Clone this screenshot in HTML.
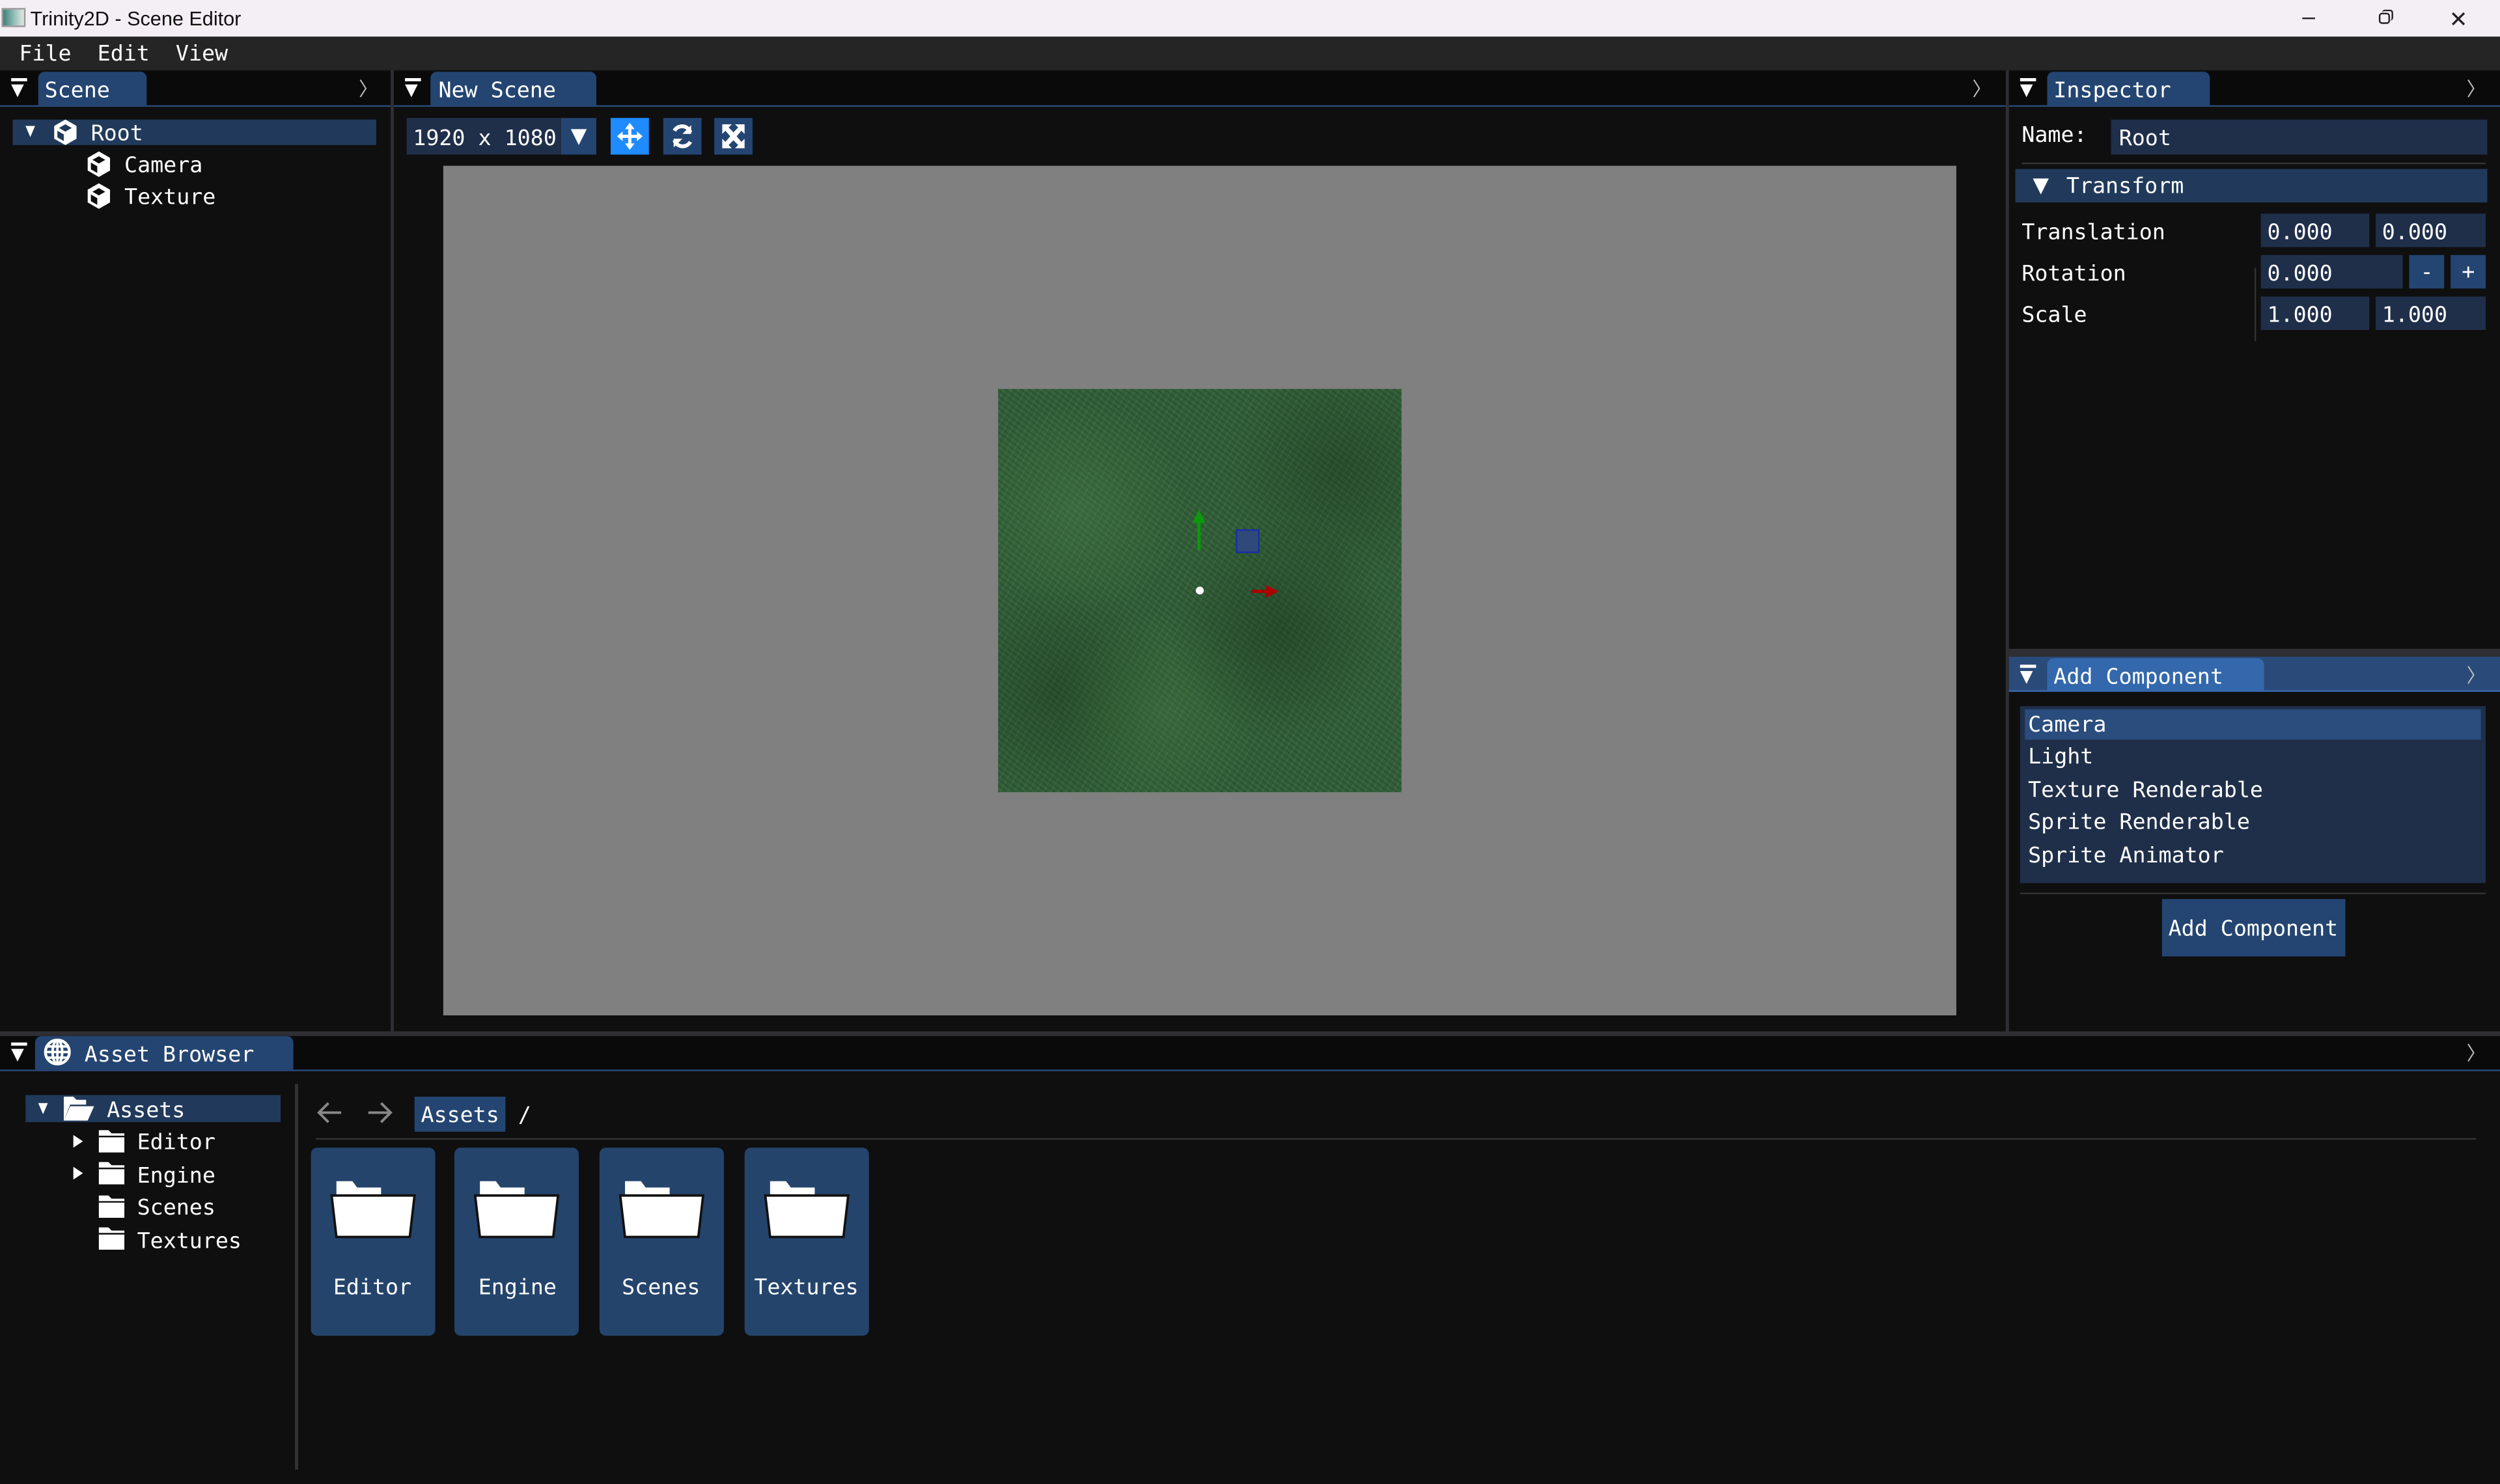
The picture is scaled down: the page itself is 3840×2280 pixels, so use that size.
<!DOCTYPE html>
<html><head><meta charset="utf-8"><style>
*{margin:0;padding:0;box-sizing:border-box}
html,body{width:3840px;height:2280px;overflow:hidden;background:#0f0f0f}
#r{position:absolute;left:0;top:0;width:1568px;height:931px;transform:scale(2.449);transform-origin:0 0;font-family:"DejaVu Sans Mono","Liberation Mono",monospace;font-size:13.6px;color:#fff;background:#0f0f0f}
.a{position:absolute}
.t{position:absolute;white-space:pre;line-height:16px;margin-top:1px}
.tabbar{position:absolute;height:22px;background:#0a0a0a;border-bottom:1px solid #294a7a}
.tab{position:absolute;top:1px;height:21px;background:#244571;border-radius:4px 4px 0 0}
.tri{position:absolute;width:0;height:0;border-left:4.5px solid transparent;border-right:4.5px solid transparent;border-top:8px solid #fff}
.fld{position:absolute;background:#1f2f4a;height:21px}
.chev{position:absolute;color:#bbb;font-size:12px}
</style></head><body><div id="r">
<div class="a" style="left:0;top:0;width:1568px;height:23px;background:#f4eef5"></div>
<div class="a" style="left:1px;top:5px;width:15px;height:12px;background:linear-gradient(90deg,#3f7f7a,#9fc6c0 60%,#e6e6e6);border:1px solid #999"></div>
<div class="t" style="left:19px;top:3px;color:#111;font-family:'Liberation Sans',sans-serif;font-size:12.5px">Trinity2D - Scene Editor</div>
<div class="a" style="left:1444px;top:11px;width:8px;height:1px;background:#222"></div>
<div class="a" style="left:1492px;top:8px;width:7px;height:7px;border:1px solid #222;border-radius:2px"></div>
<div class="a" style="left:1494px;top:6px;width:7px;height:7px;border-top:1px solid #222;border-right:1px solid #222;border-radius:2px"></div>
<div class="t" style="left:1536px;top:3px;color:#222;font-family:'Liberation Sans',sans-serif;font-size:14px">✕</div>
<div class="a" style="left:0;top:23px;width:1568px;height:21px;background:#252525"></div>
<div class="t" style="left:12px;top:25px">File  Edit  View</div>
<div class="a" style="left:245px;top:44px;width:2px;height:604px;background:#2e2e34"></div>
<div class="a" style="left:1258px;top:44px;width:2px;height:604px;background:#2e2e34"></div>
<div class="a" style="left:0;top:647px;width:1568px;height:3px;background:#2e2e34"></div>

<div class="tabbar" style="left:0;top:45px;width:245px"></div>
<div class="a" style="left:7px;top:49px;width:10px;height:2px;background:#fff"></div><div class="tri" style="left:7px;top:53px"></div>
<div class="tab" style="left:24px;top:45px;width:68px"></div>
<div class="t" style="left:28px;top:48px">Scene</div>
<div class="chev" style="left:225px;top:47px">〉</div>
<div class="a" style="left:8px;top:75px;width:228px;height:16px;background:#213a5b"></div>
<div class="tri" style="left:16px;top:79px;border-top-width:7px;border-left-width:3.5px;border-right-width:3.5px"></div>
<svg class="a" style="left:32px;top:74px" width="18" height="18" viewBox="0 0 18 18"><path d="M9 1L16 5V13L9 17L2 13V5Z" fill="#fff"/><path d="M9 4L13 6.3L9 8.6L5 6.3Z" fill="#213a5b"/><path d="M4 8L8 10.3V14.5L4 12.2Z" fill="#213a5b"/></svg>
<div class="t" style="left:57px;top:75px">Root</div>
<svg class="a" style="left:53px;top:94px" width="18" height="18" viewBox="0 0 18 18"><path d="M9 1L16 5V13L9 17L2 13V5Z" fill="#fff"/><path d="M9 4L13 6.3L9 8.6L5 6.3Z" fill="#0f0f0f"/><path d="M4 8L8 10.3V14.5L4 12.2Z" fill="#0f0f0f"/></svg>
<div class="t" style="left:78px;top:95px">Camera</div>
<svg class="a" style="left:53px;top:114px" width="18" height="18" viewBox="0 0 18 18"><path d="M9 1L16 5V13L9 17L2 13V5Z" fill="#fff"/><path d="M9 4L13 6.3L9 8.6L5 6.3Z" fill="#0f0f0f"/><path d="M4 8L8 10.3V14.5L4 12.2Z" fill="#0f0f0f"/></svg>
<div class="t" style="left:78px;top:115px">Texture</div>

<div class="tabbar" style="left:247px;top:45px;width:1011px"></div>
<div class="a" style="left:254px;top:49px;width:10px;height:2px;background:#fff"></div><div class="tri" style="left:254px;top:53px"></div>
<div class="tab" style="left:270px;top:45px;width:104px"></div>
<div class="t" style="left:275px;top:48px">New Scene</div>
<div class="chev" style="left:1237px;top:47px">〉</div>
<div class="a" style="left:255px;top:74px;width:97px;height:23px;background:#1f2f4a"></div>
<div class="a" style="left:352px;top:74px;width:22px;height:23px;background:#244571"></div>
<div class="tri" style="left:358px;top:81px;border-top-width:10px;border-left-width:5px;border-right-width:5px"></div>
<div class="t" style="left:259px;top:78px">1920 x 1080</div>
<div class="a" style="left:383px;top:74px;width:24px;height:23px;background:#1f8bff"></div>
<svg class="a" style="left:385px;top:75px" width="20" height="21" viewBox="0 0 20 21"><path d="M10 2L13 6H11V9.5H14.5V7.5L18 10.5L14.5 13.5V11.5H11V15H13L10 19L7 15H9V11.5H5.5V13.5L2 10.5L5.5 7.5V9.5H9V6H7Z" fill="#fff"/></svg>
<div class="a" style="left:416px;top:74px;width:24px;height:23px;background:#244571"></div>
<svg class="a" style="left:418px;top:75px" width="20" height="21" viewBox="0 0 20 21"><path d="M15 8A5.5 5.5 0 0 0 5 7" stroke="#fff" stroke-width="2.4" fill="none"/><path d="M15.5 3.5V9H10Z" fill="#fff"/><path d="M5 13A5.5 5.5 0 0 0 15 14" stroke="#fff" stroke-width="2.4" fill="none"/><path d="M4.5 17.5V12H10Z" fill="#fff"/></svg>
<div class="a" style="left:448px;top:74px;width:24px;height:23px;background:#244571"></div>
<svg class="a" style="left:450px;top:75px" width="20" height="21" viewBox="0 0 20 21"><path d="M3 3H9L7 5L10 8L13 5L11 3H17V9L15 7L12 10.5L15 14L17 12V18H11L13 16L10 13L7 16L9 18H3V12L5 14L8 10.5L5 7L3 9Z" fill="#fff"/></svg>
<div class="a" style="left:278px;top:104px;width:949px;height:533px;background:#808080"></div>
<div class="a" style="left:626px;top:244px;width:253px;height:253px;background:
radial-gradient(circle at 20% 30%,rgba(80,140,75,.3),transparent 25%),
radial-gradient(circle at 70% 60%,rgba(15,40,15,.35),transparent 30%),
radial-gradient(circle at 40% 80%,rgba(75,130,70,.3),transparent 25%),
radial-gradient(circle at 85% 20%,rgba(15,40,15,.3),transparent 25%),
radial-gradient(circle at 15% 75%,rgba(15,40,15,.3),transparent 25%),
repeating-linear-gradient(37deg,rgba(0,0,0,.15) 0 1px,transparent 1px 3px),
repeating-linear-gradient(-61deg,rgba(110,170,95,.12) 0 1px,transparent 1px 4px),
#33603a"></div>
<div class="a" style="left:751px;top:327px;width:1.5px;height:18px;background:#0a9a0a"></div>
<div class="tri" style="left:748px;top:320px;border-top:none;border-bottom:8px solid #0a9a0a;border-left-width:4px;border-right-width:4px"></div>
<div class="a" style="left:785px;top:370px;width:10px;height:1.5px;background:#a00"></div>
<div class="a" style="left:794px;top:367px;width:0;height:0;border-top:4px solid transparent;border-bottom:4px solid transparent;border-left:8px solid #a00"></div>
<div class="a" style="left:750px;top:368px;width:5px;height:5px;border-radius:50%;background:#fff"></div>
<div class="a" style="left:775px;top:332px;width:15px;height:15px;background:#2f4a7a;border:1px solid #1a2fa0"></div>

<div class="tabbar" style="left:1260px;top:45px;width:308px"></div>
<div class="a" style="left:1267px;top:49px;width:10px;height:2px;background:#fff"></div><div class="tri" style="left:1267px;top:53px"></div>
<div class="tab" style="left:1284px;top:45px;width:102px"></div>
<div class="t" style="left:1288px;top:48px">Inspector</div>
<div class="chev" style="left:1547px;top:47px">〉</div>
<div class="t" style="left:1268px;top:76px">Name:</div>
<div class="fld" style="left:1324px;top:75px;width:236px;height:22px"></div>
<div class="t" style="left:1329px;top:78px">Root</div>
<div class="a" style="left:1268px;top:102px;width:291px;height:1px;background:#333"></div>
<div class="a" style="left:1264px;top:106px;width:296px;height:21px;background:#213a5b"></div>
<div class="tri" style="left:1275px;top:112px;border-top-width:10px;border-left-width:5px;border-right-width:5px"></div>
<div class="t" style="left:1296px;top:108px">Transform</div>
<div class="t" style="left:1268px;top:137px">Translation</div>
<div class="t" style="left:1268px;top:163px">Rotation</div>
<div class="t" style="left:1268px;top:189px">Scale</div>
<div class="a" style="left:1414px;top:168px;width:1px;height:46px;background:#333"></div>
<div class="fld" style="left:1418px;top:134px;width:68px"></div><div class="t" style="left:1422px;top:137px">0.000</div>
<div class="fld" style="left:1490px;top:134px;width:69px"></div><div class="t" style="left:1494px;top:137px">0.000</div>
<div class="fld" style="left:1418px;top:160px;width:89px"></div><div class="t" style="left:1422px;top:163px">0.000</div>
<div class="a" style="left:1511px;top:160px;width:22px;height:21px;background:#244571"></div><div class="t" style="left:1518px;top:162px">-</div>
<div class="a" style="left:1537px;top:160px;width:22px;height:21px;background:#244571"></div><div class="t" style="left:1544px;top:162px">+</div>
<div class="fld" style="left:1418px;top:186px;width:68px"></div><div class="t" style="left:1422px;top:189px">1.000</div>
<div class="fld" style="left:1490px;top:186px;width:69px"></div><div class="t" style="left:1494px;top:189px">1.000</div>

<div class="a" style="left:1260px;top:407px;width:308px;height:5px;background:#2e2e34"></div>
<div class="a" style="left:1260px;top:412px;width:308px;height:22px;background:#2a4b7a;border-bottom:1px solid #3a6aaa"></div>
<div class="a" style="left:1267px;top:417px;width:10px;height:2px;background:#fff"></div><div class="tri" style="left:1267px;top:421px"></div>
<div class="a" style="left:1284px;top:413px;width:136px;height:21px;background:#3368ac;border-radius:4px 4px 0 0"></div>
<div class="t" style="left:1288px;top:416px">Add Component</div>
<div class="chev" style="left:1547px;top:415px">〉</div>
<div class="a" style="left:1267px;top:443px;width:292px;height:111px;background:#1f2f4a"></div>
<div class="a" style="left:1270px;top:445px;width:286px;height:19px;background:#2a4d7d"></div>
<div class="t" style="left:1272px;top:446px">Camera</div>
<div class="t" style="left:1272px;top:466px">Light</div>
<div class="t" style="left:1272px;top:487px">Texture Renderable</div>
<div class="t" style="left:1272px;top:507px">Sprite Renderable</div>
<div class="t" style="left:1272px;top:528px">Sprite Animator</div>
<div class="a" style="left:1267px;top:560px;width:292px;height:1px;background:#333"></div>
<div class="a" style="left:1356px;top:564px;width:115px;height:36px;background:#244571"></div>
<div class="t" style="left:1360px;top:574px">Add Component</div>

<div class="tabbar" style="left:0;top:650px;width:1568px"></div>
<div class="a" style="left:7px;top:654px;width:10px;height:2px;background:#fff"></div><div class="tri" style="left:7px;top:658px"></div>
<div class="tab" style="left:22px;top:650px;width:162px"></div>
<svg class="a" style="left:27px;top:651px" width="18" height="18" viewBox="0 0 18 18"><circle cx="9" cy="9" r="7.5" fill="none" stroke="#fff" stroke-width="1.8"/><ellipse cx="9" cy="9" rx="3" ry="7.5" fill="none" stroke="#fff" stroke-width="1.6"/><path d="M1.5 9H16.5M2.5 5.5H15.5M2.5 12.5H15.5M9 1.5V16.5" stroke="#fff" stroke-width="1.5"/></svg>
<div class="t" style="left:53px;top:653px">Asset Browser</div>
<div class="chev" style="left:1547px;top:652px">〉</div>
<div class="a" style="left:185px;top:680px;width:2px;height:242px;background:#333"></div>
<div class="a" style="left:16px;top:687px;width:160px;height:17px;background:#213a5b"></div>
<div class="tri" style="left:24px;top:692px;border-top-width:7px;border-left-width:3.5px;border-right-width:3.5px"></div>
<svg class="a" style="left:38px;top:685px" width="22" height="20" viewBox="0 0 22 20"><path d="M2 3H8L10 5H16V8H6L2 18Z" fill="#fff"/><path d="M6 9H21L17 18H2Z" fill="#fff"/></svg>
<div class="t" style="left:67px;top:688px">Assets</div>
<svg class="a" style="left:60px;top:707px" width="20" height="18" viewBox="0 0 20 18"><path d="M2 2H8L10 4H18V16H2Z" fill="#fff"/><path d="M2 6H18" stroke="#0f0f0f" stroke-width="1"/></svg>
<svg class="a" style="left:60px;top:727px" width="20" height="18" viewBox="0 0 20 18"><path d="M2 2H8L10 4H18V16H2Z" fill="#fff"/><path d="M2 6H18" stroke="#0f0f0f" stroke-width="1"/></svg>
<svg class="a" style="left:60px;top:748px" width="20" height="18" viewBox="0 0 20 18"><path d="M2 2H8L10 4H18V16H2Z" fill="#fff"/><path d="M2 6H18" stroke="#0f0f0f" stroke-width="1"/></svg>
<svg class="a" style="left:60px;top:768px" width="20" height="18" viewBox="0 0 20 18"><path d="M2 2H8L10 4H18V16H2Z" fill="#fff"/><path d="M2 6H18" stroke="#0f0f0f" stroke-width="1"/></svg>
<div class="a" style="left:46px;top:712px;border-top:4px solid transparent;border-bottom:4px solid transparent;border-left:6px solid #fff"></div>
<div class="a" style="left:46px;top:732px;border-top:4px solid transparent;border-bottom:4px solid transparent;border-left:6px solid #fff"></div>
<div class="t" style="left:86px;top:708px">Editor</div>
<div class="t" style="left:86px;top:729px">Engine</div>
<div class="t" style="left:86px;top:749px">Scenes</div>
<div class="t" style="left:86px;top:770px">Textures</div>
<svg class="a" style="left:198px;top:690px" width="18" height="16" viewBox="0 0 18 16"><path d="M16 8H3M8 2L2 8L8 14" stroke="#888" stroke-width="1.6" fill="none"/></svg>
<svg class="a" style="left:229px;top:690px" width="18" height="16" viewBox="0 0 18 16"><path d="M2 8H15M10 2L16 8L10 14" stroke="#888" stroke-width="1.6" fill="none"/></svg>
<div class="a" style="left:260px;top:688px;width:57px;height:22px;background:#244571"></div>
<div class="t" style="left:264px;top:691px">Assets</div>
<div class="t" style="left:325px;top:691px">/</div>
<div class="a" style="left:198px;top:714px;width:1355px;height:1px;background:#333"></div>

<div class="a" style="left:195px;top:720px;width:78px;height:118px;background:#24446c;border-radius:4px"></div>
<div class="a" style="left:285px;top:720px;width:78px;height:118px;background:#24446c;border-radius:4px"></div>
<div class="a" style="left:376px;top:720px;width:78px;height:118px;background:#24446c;border-radius:4px"></div>
<div class="a" style="left:467px;top:720px;width:78px;height:118px;background:#24446c;border-radius:4px"></div>
<svg class="a" style="left:207px;top:740px" width="54" height="38" viewBox="0 0 54 38"><path d="M4 1H14L17 5H32V10H4Z" fill="#fff"/><path d="M1 10H53L50 36H4Z" fill="#fff" stroke="#111" stroke-width="1.5"/></svg>
<svg class="a" style="left:297px;top:740px" width="54" height="38" viewBox="0 0 54 38"><path d="M4 1H14L17 5H32V10H4Z" fill="#fff"/><path d="M1 10H53L50 36H4Z" fill="#fff" stroke="#111" stroke-width="1.5"/></svg>
<svg class="a" style="left:388px;top:740px" width="54" height="38" viewBox="0 0 54 38"><path d="M4 1H14L17 5H32V10H4Z" fill="#fff"/><path d="M1 10H53L50 36H4Z" fill="#fff" stroke="#111" stroke-width="1.5"/></svg>
<svg class="a" style="left:479px;top:740px" width="54" height="38" viewBox="0 0 54 38"><path d="M4 1H14L17 5H32V10H4Z" fill="#fff"/><path d="M1 10H53L50 36H4Z" fill="#fff" stroke="#111" stroke-width="1.5"/></svg>
<div class="t" style="left:209px;top:799px">Editor</div>
<div class="t" style="left:300px;top:799px">Engine</div>
<div class="t" style="left:390px;top:799px">Scenes</div>
<div class="t" style="left:473px;top:799px">Textures</div>
</div></body></html>
